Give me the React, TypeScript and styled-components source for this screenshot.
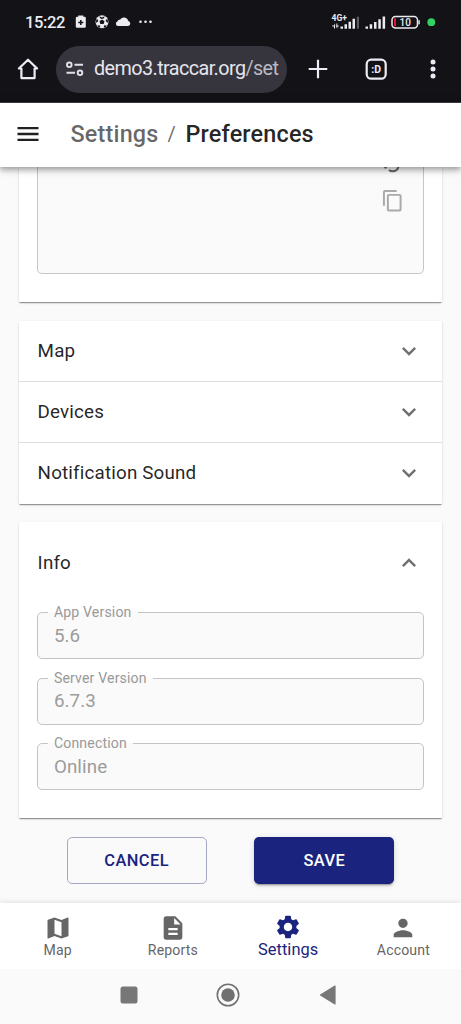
import React from "react";
import styled, { createGlobalStyle } from "styled-components";

const GlobalStyle = createGlobalStyle`
  *, *::before, *::after { box-sizing: border-box; }
  body { margin: 0; background: #fafafa; font-family: Roboto, "Liberation Sans", sans-serif; }
`;

const Screen = styled.div`
  width: 461px;
  height: 1024px;
  display: flex;
  flex-direction: column;
  overflow: hidden;
  background: #fafafa;
  color: rgba(0, 0, 0, 0.87);
`;

/* Browser chrome */
const BrowserTop = styled.div`
  flex: none;
  height: 103px;
  background: #121217;
  border-bottom: 1px solid #3f3f43;
  color: #ececf2;
`;
const StatusBar = styled.div`
  height: 44px;
  display: flex;
  align-items: center;
  justify-content: space-between;
  padding: 0 25px 0 25px;
`;
const StatusGroup = styled.div`
  display: flex;
  align-items: center;
`;
const Clock = styled.span`
  font-size: 16.5px;
  font-weight: 500;
  letter-spacing: -0.4px;
  width: 50px;
`;
const AddressRow = styled.div`
  height: 50px;
  display: flex;
  align-items: center;
  padding-left: 14px;
`;
const ChromeIcon = styled.svg<{ $gap?: number }>`
  flex: none;
  width: 28px;
  height: 28px;
  margin-left: ${(p) => p.$gap ?? 0}px;
`;
const AddressPill = styled.div`
  width: 231px;
  height: 47px;
  margin-left: 14px;
  padding-left: 10px;
  border-radius: 24px;
  background: #36353d;
  display: flex;
  align-items: center;
`;
const TuneIcon = styled.svg`
  width: 18px;
  height: 16px;
  flex: none;
`;
const Url = styled.span`
  margin-left: 10px;
  white-space: nowrap;
  font-size: 19.8px;
  letter-spacing: -0.58px;
  line-height: 28px;
  color: #e6e5ed;
`;
const UrlPath = styled.span`
  color: #bbbac3;
`;

/* Application bar */
const AppBar = styled.header`
  position: relative;
  z-index: 1;
  flex: none;
  height: 64px;
  display: flex;
  align-items: center;
  padding: 0 14px 2px;
  background: #fff;
  box-shadow: 0 2px 5px rgba(0, 0, 0, 0.22), 0 4px 6px rgba(0, 0, 0, 0.13), 0 1px 12px rgba(0, 0, 0, 0.12);
`;
const Title = styled.h1`
  margin: 0 0 0 28.5px;
  display: flex;
  align-items: center;
  font-size: 23.4px;
  font-weight: 500;
  letter-spacing: 0.18px;
  line-height: 36px;
`;
const Parent = styled.span`
  color: rgba(0, 0, 0, 0.6);
`;
const Separator = styled.span`
  margin: 0 9.5px 0 9px;
  font-size: 20px;
  font-weight: 400;
  color: rgba(0, 0, 0, 0.6);
`;

const Icon = styled.svg<{ $size?: number }>`
  display: block;
  flex: none;
  width: ${(p) => p.$size ?? 28}px;
  height: ${(p) => p.$size ?? 28}px;
  fill: currentColor;
`;

/* Page content */
const Content = styled.main`
  flex: 1;
  min-height: 0;
  overflow: hidden;
  display: flex;
  flex-direction: column;
  padding: 0 19px;
`;
const Card = styled.section`
  flex: none;
  background: #fff;
  border-radius: 1px;
  box-shadow: 0 2px 1px -1px rgba(0, 0, 0, 0.24), 0 1px 1px rgba(0, 0, 0, 0.16), 0 1px 3px rgba(0, 0, 0, 0.12);
  margin-bottom: 18.5px;
`;
const AttributesCard = styled(Card)`
  height: 135px;
  padding: 0 18.5px 28.5px 18.4px;
`;
const TextArea = styled.div`
  height: 106.5px;
  border: 1px solid #c6c6c6;
  border-top: 0;
  border-radius: 0 0 5px 5px;
  background: #fafafa;
  display: flex;
  flex-direction: column;
  align-items: flex-end;
  padding-right: 18px;
`;
const ArcIcon = styled.svg`
  display: block;
  width: 24px;
  height: 7px;
`;
const CopyIcon = styled(Icon)`
  margin-top: 15px;
  color: #a9a9a9;
`;

const Row = styled.div<{ $height: number; $divided?: boolean }>`
  height: ${(p) => p.$height}px;
  display: flex;
  align-items: center;
  justify-content: space-between;
  padding: 0 19px 0 18.6px;
  border-top: ${(p) => (p.$divided ? "1px solid #dedede" : "0")};
  font-size: 18.77px;
  letter-spacing: 0.18px;
`;
const Chevron = styled(Icon)<{ $up?: boolean }>`
  color: #707070;
  transform: ${(p) => (p.$up ? "rotate(180deg)" : "none")};
`;
const Fields = styled.div`
  display: flex;
  flex-direction: column;
  gap: 10.7px;
  padding: 0 18.5px 28px 18.4px;
`;
const Field = styled.fieldset`
  height: 55px;
  min-width: 0;
  margin: 0;
  padding: 0 16px 0 9.5px;
  border: 1px solid #c4c4c4;
  border-radius: 5px;
  background: #fafafa;
`;
const Legend = styled.legend`
  padding: 0 6px;
  font-size: 14.08px;
  line-height: 17px;
  letter-spacing: 0.16px;
  color: #999;
`;
const Value = styled.div`
  padding: 2.5px 0 0 6px;
  font-size: 18.77px;
  line-height: 24px;
  letter-spacing: 0.1px;
  color: #9c9c9c;
`;
const Actions = styled.div`
  display: flex;
  justify-content: space-evenly;
`;
const Button = styled.button<{ $primary?: boolean }>`
  width: 140px;
  height: 47px;
  padding: 1px 0 0;
  font: 500 16.43px/28px Roboto, "Liberation Sans", sans-serif;
  letter-spacing: 0.45px;
  border-radius: 5px;
  color: ${(p) => (p.$primary ? "#fff" : "#1a237e")};
  background: ${(p) => (p.$primary ? "#1a237e" : "transparent")};
  border: ${(p) => (p.$primary ? "0" : "1px solid #a6a8c8")};
  box-shadow: ${(p) =>
    p.$primary ? "0 3px 1px -2px rgba(0,0,0,.2), 0 2px 2px rgba(0,0,0,.14), 0 1px 6px rgba(0,0,0,.12)" : "none"};
`;

/* Bottom navigation */
const BottomNav = styled.nav`
  position: relative;
  flex: none;
  height: 66px;
  display: grid;
  grid-template-columns: repeat(4, 1fr);
  background: #fff;
  box-shadow: 0 -1px 5px rgba(0, 0, 0, 0.1);
`;
const NavItem = styled.div<{ $active?: boolean }>`
  display: flex;
  flex-direction: column;
  align-items: center;
  padding-top: ${(p) => (p.$active ? 9.5 : 10.5)}px;
  color: ${(p) => (p.$active ? "#1a237e" : "#666")};
  font-size: ${(p) => (p.$active ? 16.43 : 14.08)}px;
  letter-spacing: ${(p) => (p.$active ? 0.05 : 0.15)}px;
  line-height: ${(p) => (p.$active ? 18 : 17)}px;
`;
const SystemNav = styled.div`
  position: relative;
  flex: none;
  height: 55px;
  display: flex;
  justify-content: center;
  align-items: center;
  gap: 75.5px;
  padding: 0 5px 4px 0;
  background: #fafafa;
`;

const paths = {
  menu: "M3 18h18v-2H3zm0-5h18v-2H3zm0-7v2h18V6z",
  expand: "M16.59 8.59 12 13.17 7.41 8.59 6 10l6 6 6-6z",
  copy: "M16 1H4c-1.1 0-2 .9-2 2v14h2V3h12zm3 4H8c-1.1 0-2 .9-2 2v14c0 1.1.9 2 2 2h11c1.1 0 2-.9 2-2V7c0-1.1-.9-2-2-2m0 16H8V7h11z",
  map: "m20.5 3-.16.03L15 5.1 9 3 3.36 4.9c-.21.07-.36.25-.36.48V20.5c0 .28.22.5.5.5l.16-.03L9 18.9l6 2.1 5.64-1.9c.21-.07.36-.25.36-.48V3.5c0-.28-.22-.5-.5-.5M15 19l-6-2.11V5l6 2.11z",
  reports: "M14 2H6c-1.1 0-1.99.9-1.99 2L4 20c0 1.1.89 2 1.99 2H18c1.1 0 2-.9 2-2V8zm2 16H8v-2h8zm0-4H8v-2h8zm-3-5V3.5L18.5 9z",
  settings:
    "M19.14 12.94c.04-.3.06-.61.06-.94 0-.32-.02-.64-.07-.94l2.03-1.58c.18-.14.23-.41.12-.61l-1.92-3.32c-.12-.22-.37-.29-.59-.22l-2.39.96c-.5-.38-1.03-.7-1.62-.94l-.36-2.54c-.04-.24-.24-.41-.48-.41h-3.84c-.24 0-.43.17-.47.41l-.36 2.54c-.59.24-1.13.57-1.62.94l-2.39-.96c-.22-.08-.47 0-.59.22L2.74 8.87c-.12.21-.08.47.12.61l2.03 1.58c-.05.3-.09.63-.09.94s.02.64.07.94l-2.03 1.58c-.18.14-.23.41-.12.61l1.92 3.32c.12.22.37.29.59.22l2.39-.96c.5.38 1.03.7 1.62.94l.36 2.54c.05.24.24.41.48.41h3.84c.24 0 .44-.17.47-.41l.36-2.54c.59-.24 1.13-.56 1.62-.94l2.39.96c.22.08.47 0 .59-.22l1.92-3.32c.12-.22.07-.47-.12-.61zM12 15.6c-1.98 0-3.6-1.62-3.6-3.6s1.62-3.6 3.6-3.6 3.6 1.62 3.6 3.6-1.62 3.6-3.6 3.6",
  account: "M12 12c2.21 0 4-1.79 4-4s-1.79-4-4-4-4 1.79-4 4 1.79 4 4 4m0 2c-2.67 0-8 1.34-8 4v2h16v-2c0-2.66-5.33-4-8-4",
};

const navItems = [
  { label: "Map", path: paths.map },
  { label: "Reports", path: paths.reports },
  { label: "Settings", path: paths.settings, active: true },
  { label: "Account", path: paths.account },
];

const sections = [
  { label: "Map", height: 60.5 },
  { label: "Devices", height: 61 },
  { label: "Notification Sound", height: 61.5 },
];

const info = [
  { label: "App Version", value: "5.6" },
  { label: "Server Version", value: "6.7.3" },
  { label: "Connection", value: "Online" },
];

function NotificationIcons() {
  return (
    <svg width="80" height="16" viewBox="0 0 80 16" fill="#ececf0">
      <path d="M3.300 1.500h5V3h-5z" />
      <rect x="0.800" y="2.800" width="10" height="11" rx="1.300" />
      <path d="M5.800 5.900v5M3.300 8.400h5" stroke="#121217" strokeWidth="1.500" />
      <circle cx="27" cy="7.800" r="6.500" />
      <g fill="#121217">
        <path d="m27 5.400 2.500 1.800-.9 2.900h-3.200l-.9-2.900z" />
        <path d="M24.300 2.200 27 3.600l2.700-1.400-.8 2-1.900.9-1.900-.9zM21.300 5.300l2 .5-.4 1.800-1.900 1.400zM32.700 5.300l-2 .5.400 1.800 1.900 1.400zM22.300 11.600l2.300-.4.800 2.400-1.600-.2zM31.700 11.600l-2.300-.4-.8 2.400 1.600-.2z" />
      </g>
      <path d="M43.900 12h10.100a2.500 2.500 0 0 0 .3-4.900 4.600 4.600 0 0 0-8.200-1.700 3.500 3.500 0 0 0-2.900 2 2.400 2.400 0 0 0 .7 4.600z" transform="translate(-.9 0)" />
      <circle cx="65.500" cy="7.800" r="1.300" />
      <circle cx="70.500" cy="7.800" r="1.300" />
      <circle cx="75.500" cy="7.800" r="1.300" />
    </svg>
  );
}

function SignalIcons() {
  return (
    <svg width="106" height="18" viewBox="0 0 106 18" fill="#ececf0">
      <text x="1.500" y="8.200" fontFamily="Roboto, sans-serif" fontSize="8.500" fontWeight="700">
        4G+
      </text>
      <path d="M2.200 12.500h2v-2l1.300 2H5v3H4v-2H2.200zM6.300 10.500h1v2h1.500v1H7.300v2l-1.600-2h.6z" />
      <path d="M10.500 13.400h2.500v2.300h-2.500zM14.500 11.200H17v4.500h-2.500zM18.500 8.700H21v7h-2.500zM22.500 5.700H25v10h-2.500z" />
      <path d="M26.800 3.700h2.200v12h-2.200z" opacity=".35" />
      <path d="M35.500 13.400H38v2.300h-2.500zM39.700 11.200h2.500v4.500h-2.500zM44 8.900h2.500v6.800H44zM48.300 6.200h2.500v9.500h-2.500zM52.600 3.500h2.500v12.200h-2.500z" />
      <rect x="62" y="3.500" width="25.500" height="11.500" rx="3.500" fill="none" stroke="#ececf0" strokeWidth="1.500" />
      <path d="M64 5.300h2v8h-2z" fill="#e11531" />
      <path d="M88.400 7.300h1.400v4h-1.400z" />
      <text x="75.300" y="12.800" textAnchor="middle" fontFamily="Roboto, sans-serif" fontSize="10" fontWeight="500">
        10
      </text>
      <circle cx="101.300" cy="9.200" r="3.900" fill="#31d262" />
    </svg>
  );
}

export default function App() {
  return (
    <Screen>
      <GlobalStyle />
      <BrowserTop>
        <StatusBar>
          <StatusGroup>
            <Clock>15:22</Clock>
            <NotificationIcons />
          </StatusGroup>
          <SignalIcons />
        </StatusBar>
        <AddressRow>
          <ChromeIcon viewBox="0 0 28 28" fill="none" stroke="#ececf6" strokeWidth="2.200" strokeLinejoin="round" strokeLinecap="round">
            <path d="M14 4.700 4.900 13.500h2.500v9.600h13.200v-9.600h2.500z" />
          </ChromeIcon>
          <AddressPill>
            <TuneIcon viewBox="0 0 18 16" fill="none" stroke="#e2e1ea" strokeWidth="1.900">
              <circle cx="3.300" cy="3.800" r="2.300" />
              <path d="M8.500 3.800H17M.5 11.800h8.500" />
              <circle cx="14" cy="11.800" r="2.300" />
            </TuneIcon>
            <Url>
              demo3.traccar.org<UrlPath>/set</UrlPath>
            </Url>
          </AddressPill>
          <ChromeIcon $gap={17} viewBox="0 0 28 28" stroke="#ececf6" strokeWidth="2.200">
            <path d="M14 4.700v18.600M4.700 14h18.600" />
          </ChromeIcon>
          <ChromeIcon $gap={30} viewBox="0 0 28 28">
            <rect x="4.700" y="4.700" width="19" height="19" rx="4.500" fill="none" stroke="#ececf6" strokeWidth="2.200" />
            <text x="14.200" y="17.600" textAnchor="middle" fill="#ececf6" fontFamily="Roboto, sans-serif" fontSize="10.500" fontWeight="700">
              :D
            </text>
          </ChromeIcon>
          <ChromeIcon $gap={28.5} viewBox="0 0 28 28" fill="#ececf6">
            <circle cx="14" cy="7" r="2.500" />
            <circle cx="14" cy="14" r="2.500" />
            <circle cx="14" cy="21" r="2.500" />
          </ChromeIcon>
        </AddressRow>
      </BrowserTop>

      <AppBar>
        <Icon viewBox="0 0 24 24">
          <path d={paths.menu} />
        </Icon>
        <Title>
          <Parent>Settings</Parent>
          <Separator>/</Separator>
          <span>Preferences</span>
        </Title>
      </AppBar>

      <Content>
        <AttributesCard>
          <TextArea>
            <ArcIcon viewBox="0 0 24 7" fill="none" stroke="#666" strokeWidth="2">
              <path d="M3.500 0 5.500 1.200M8 3c2 1.800 5.500 1.700 7.600 0 1-.9 1.600-1.900 1.900-3.500" />
            </ArcIcon>
            <CopyIcon $size={23.5} viewBox="0 0 24 24">
              <path d={paths.copy} />
            </CopyIcon>
          </TextArea>
        </AttributesCard>

        <Card>
          {sections.map((s, i) => (
            <Row key={s.label} $height={s.height} $divided={i > 0}>
              <span>{s.label}</span>
              <Chevron viewBox="0 0 24 24">
                <path d={paths.expand} />
              </Chevron>
            </Row>
          ))}
        </Card>

        <Card>
          <Row $height={82}>
            <span>Info</span>
            <Chevron $up viewBox="0 0 24 24">
              <path d={paths.expand} />
            </Chevron>
          </Row>
          <Fields>
            {info.map((f) => (
              <Field key={f.label}>
                <Legend>{f.label}</Legend>
                <Value>{f.value}</Value>
              </Field>
            ))}
          </Fields>
        </Card>

        <Actions>
          <Button>CANCEL</Button>
          <Button $primary>SAVE</Button>
        </Actions>
      </Content>

      <BottomNav>
        {navItems.map((n) => (
          <NavItem key={n.label} $active={n.active}>
            <Icon viewBox="0 0 24 24">
              <path d={n.path} />
            </Icon>
            {n.label}
          </NavItem>
        ))}
      </BottomNav>
      <SystemNav>
        <svg width="24" height="24" viewBox="0 0 24 24">
          <rect x="3.500" y="3.500" width="17" height="17" rx="2.500" fill="#777" />
        </svg>
        <svg width="24" height="24" viewBox="0 0 24 24">
          <circle cx="12" cy="12" r="10.700" fill="none" stroke="#707070" strokeWidth="1.600" />
          <circle cx="12" cy="12" r="6.800" fill="#707070" />
        </svg>
        <svg width="24" height="24" viewBox="0 0 24 24">
          <path d="M19 3v18L4.500 12z" fill="#777" stroke="#777" strokeWidth="1.200" strokeLinejoin="round" />
        </svg>
      </SystemNav>
    </Screen>
  );
}
